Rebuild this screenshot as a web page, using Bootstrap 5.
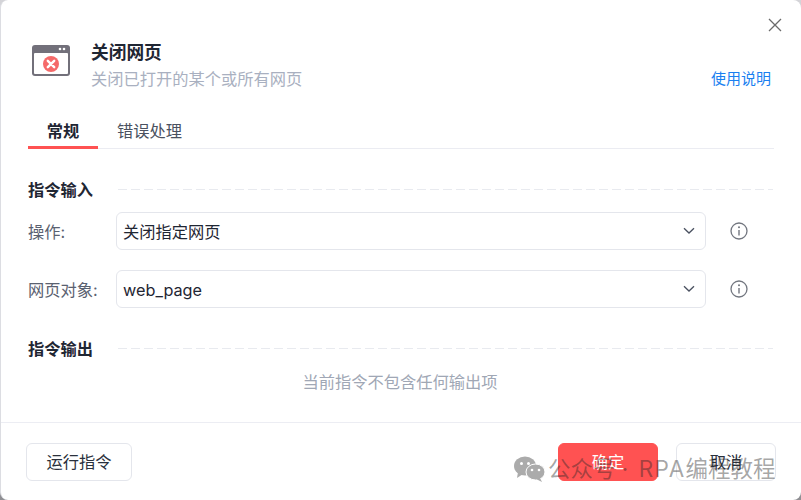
<!DOCTYPE html>
<html lang="en">
<head>
    <meta charset="UTF-8">
    <meta name="viewport" content="width=device-width, initial-scale=1.0">
    <title>关闭网页</title>
    <link rel="stylesheet" href="https://cdn.jsdelivr.net/npm/bootstrap@5.3.0/dist/css/bootstrap.min.css">
    <style>
        html, body { height: 100%; }
        body {
            background: linear-gradient(#d4d4d8, #8f8f93);
            font-family: "Inter", "Noto Sans CJK SC", sans-serif;
            font-size: 16.25px;
            color: #1f2633;
            overflow: hidden;
        }
        .dlg {
            position: relative;
            height: 500px;
            background: #fff;
            border-radius: 8px;
            border-left: 1px solid #dcdde2;
        }
        .dlg-close { position: absolute; top: 18px; right: 19px; line-height: 0; }
        .dlg-top { height: 122px; padding: 43px 30px 0 31px; }
        .dlg-icon { width: 38px; height: 33px; margin-right: 21px; }
        .dlg-text { margin-top: -1px; }
        .dlg-title { font-size: 17.7px; font-weight: 700; line-height: 22px; }
        .dlg-sub { line-height: 22px; color: #a9b0c0; margin-top: 4px; }
        .dlg-help { font-size: 15px; line-height: 22px; color: #1a7ff0; text-decoration: none; }
        .dlg-tabs { margin: 0 27px; border-bottom: 1px solid #ebecf2; height: 27px; }
        .dlg-tab { width: 70px; height: 27px; text-align: center; line-height: 18px; }
        .dlg-tab-on { font-weight: 700; border-bottom: 3px solid #ff5252; }
        .dlg-tab-off { margin-left: 19px; width: auto; color: #4a5160; }
        .sect-head { margin: 29px 28px 0 27px; height: 24px; }
        .sect-name { font-weight: 700; line-height: 24px; width: 90px; flex: none; }
        .sect-line {
            flex: 1; height: 1px; margin-top: -2px;
            background: repeating-linear-gradient(90deg, #e8eaef 0 9px, transparent 9px 13px);
        }
        .field-row { margin: 10px 0 0 27px; height: 38px; }
        .field-row-next { margin-top: 20px; }
        .field-label { width: 88px; flex: none; color: #5a6170; padding-top: 2px; }
        .field-box {
            width: 590px; height: 38px; padding: 2px 6px 0;
            border: 1px solid #e4e6ec; border-radius: 6px;
        }
        .field-box svg { margin-top: -3px; }
        .field-info { margin-left: 24px; line-height: 0; }
        .out-empty { text-align: center; color: #a0a7b5; line-height: 22px; margin-top: 10px; padding-right: 2px; }
        .dlg-foot {
            position: absolute; left: 0; right: 0; top: 422px; bottom: 0;
            border-top: 1px solid #ecedf3;
            padding: 20px 25px 0 25px;
        }
        .btn.foot-btn {
            height: 38px; padding: 0; font-size: 16.25px; line-height: 36px;
            border: 1px solid #e4e6ec; border-radius: 6px; color: #2a303c; background: #fff;
        }
        .foot-run { width: 106px; padding-left: 1px; }
        .foot-cancel { width: 100px; margin-left: 18px; }
        .btn.foot-ok { width: 100px; background: #ff5252; border-color: #ff5252; color: #fff; }
        .wm {
            position: absolute; left: 513px; top: 453px;
            pointer-events: none; color: rgba(40, 40, 40, .42);
            font-size: 22.5px; line-height: 30px; white-space: pre;
        }
        .wm svg { margin-right: 3px; }
        .wm-text { padding-top: 1px; }
        .wm-latin { letter-spacing: 1.4px; margin-left: 4px; }
    </style>
</head>
<body>
    <div class="dlg">
        <!-- close -->
        <div class="dlg-close">
            <svg width="14" height="14" viewBox="0 0 14 14"><path d="M1 1 13 13M13 1 1 13" stroke="#6b6b6b" stroke-width="1.3" fill="none"/></svg>
        </div>

        <!-- header -->
        <div class="dlg-top d-flex">
            <svg class="dlg-icon flex-none" viewBox="0 0 38 33">
                <rect x="0" y="2" width="38" height="31" rx="3" fill="#72707a"/>
                <rect x="2" y="10" width="34" height="21" rx="1" fill="#fff"/>
                <circle cx="28" cy="6" r="1.3" fill="#fff"/>
                <circle cx="32" cy="6" r="1.3" fill="#fff"/>
                <circle cx="19" cy="21" r="8" fill="#f56a6a"/>
                <path d="M15.8 17.8 22.2 24.2M22.2 17.8 15.8 24.2" stroke="#fff" stroke-width="2.4" stroke-linecap="round"/>
            </svg>
            <div class="flex-grow-1 dlg-text">
                <div class="dlg-title">关闭网页</div>
                <div class="d-flex justify-content-between">
                    <div class="dlg-sub">关闭已打开的某个或所有网页</div>
                    <a class="dlg-help align-self-end" href="#">使用说明</a>
                </div>
            </div>
        </div>

        <!-- tabs -->
        <div class="dlg-tabs d-flex">
            <div class="dlg-tab dlg-tab-on">常规</div>
            <div class="dlg-tab dlg-tab-off">错误处理</div>
        </div>

        <!-- input section -->
        <div class="sect-head d-flex align-items-center">
            <div class="sect-name">指令输入</div>
            <div class="sect-line"></div>
        </div>
        <div class="field-row d-flex align-items-center">
            <div class="field-label">操作:</div>
            <div class="field-box d-flex align-items-center justify-content-between">
                <span>关闭指定网页</span>
                <svg width="12" height="8" viewBox="0 0 12 8" class="me-1"><path d="M1 1.2 6 6 11 1.2" stroke="#4a5160" stroke-width="1.3" fill="none"/></svg>
            </div>
            <div class="field-info">
                <svg width="18" height="18" viewBox="0 0 18 18"><circle cx="9" cy="9" r="8" stroke="#72767f" stroke-width="1.3" fill="none"/><path d="M9 8v5.5" stroke="#72767f" stroke-width="1.4"/><circle cx="9" cy="5.2" r="1" fill="#72767f"/></svg>
            </div>
        </div>
        <div class="field-row field-row-next d-flex align-items-center">
            <div class="field-label">网页对象:</div>
            <div class="field-box d-flex align-items-center justify-content-between">
                <span>web_page</span>
                <svg width="12" height="8" viewBox="0 0 12 8" class="me-1"><path d="M1 1.2 6 6 11 1.2" stroke="#4a5160" stroke-width="1.3" fill="none"/></svg>
            </div>
            <div class="field-info">
                <svg width="18" height="18" viewBox="0 0 18 18"><circle cx="9" cy="9" r="8" stroke="#72767f" stroke-width="1.3" fill="none"/><path d="M9 8v5.5" stroke="#72767f" stroke-width="1.4"/><circle cx="9" cy="5.2" r="1" fill="#72767f"/></svg>
            </div>
        </div>

        <!-- output section -->
        <div class="sect-head d-flex align-items-center">
            <div class="sect-name">指令输出</div>
            <div class="sect-line"></div>
        </div>
        <div class="out-empty">当前指令不包含任何输出项</div>

        <!-- footer -->
        <div class="dlg-foot d-flex">
            <button type="button" class="btn foot-btn foot-run">运行指令</button>
            <button type="button" class="btn foot-btn foot-ok ms-auto">确定</button>
            <button type="button" class="btn foot-btn foot-cancel">取消</button>
        </div>

        <!-- watermark -->
        <div class="wm d-flex align-items-center">
            <svg width="31" height="26" viewBox="0 0 31 26">
                <ellipse cx="11" cy="10" rx="11" ry="9.5" fill="#ababab"/>
                <path d="M4 16 3 22 9 18Z" fill="#ababab"/>
                <ellipse cx="21.5" cy="16" rx="9.5" ry="8" fill="#ababab" stroke="#fff" stroke-width="1"/>
                <path d="M26 22 28 26 22 23Z" fill="#ababab"/>
                <circle cx="7.5" cy="7.5" r="1.5" fill="#fff"/><circle cx="14.5" cy="7.5" r="1.5" fill="#fff"/>
                <circle cx="18" cy="14" r="1.3" fill="#fff"/><circle cx="25" cy="14" r="1.3" fill="#fff"/>
            </svg>
            <span class="wm-text">公众号 · <span class="wm-latin">RPA</span>编程教程</span>
        </div>
    </div>
</body>
</html>
